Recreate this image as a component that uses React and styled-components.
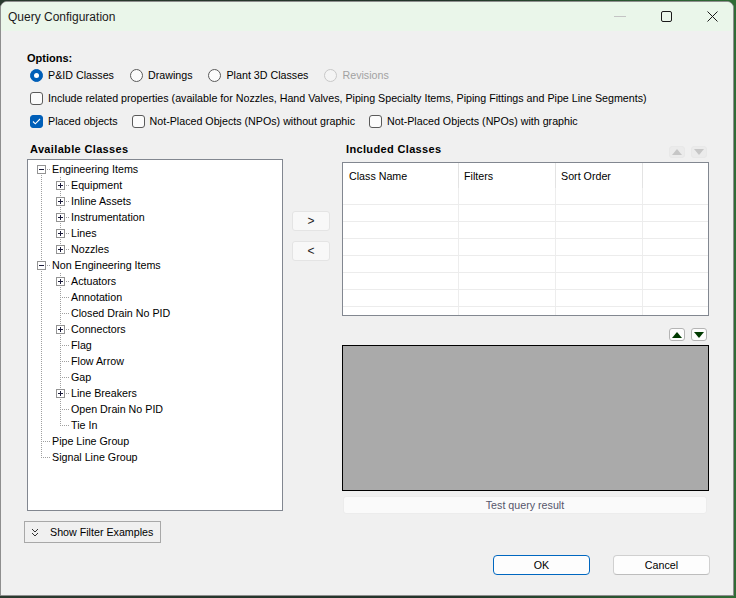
import React from 'react';
import styled, { createGlobalStyle } from 'styled-components';

const GlobalStyle = createGlobalStyle`
  html, body { margin: 0; padding: 0; }
  body {
    width: 736px; height: 598px; overflow: hidden;
    background: linear-gradient(90deg, #2a3a2e 0%, #23332a 60%, #2f6b35 100%);
    font-family: "Liberation Sans", Arial, sans-serif;
    font-size: 10.7px; color: #000;
  }
`;

const Window = styled.div`
  box-sizing: border-box;
  width: 734px;
  height: 595px;
  margin-top: 1px;
  border: 1px solid #8e8e8e;
  border-radius: 7px 7px 0 0;
  background: #f0f0f0;
  overflow: hidden;
  display: flex;
  flex-direction: column;
`;

const TitleBar = styled.div`
  height: 29px;
  flex: none;
  background: #eaf6ea;
  display: flex;
  align-items: center;
  padding-left: 7px;
`;

const Title = styled.div`
  flex: 1;
  font-family: "Segoe UI", "Liberation Sans", Arial, sans-serif;
  font-size: 12px;
  color: #1a1a1a;
`;

const Caption = styled.div`
  display: flex;
  height: 100%;
  margin-right: -2px;
`;

const CaptionButton = styled.div`
  width: 46px;
  height: 100%;
  display: flex;
  align-items: center;
  justify-content: center;
`;

const Content = styled.div`
  flex: 1;
  display: flex;
  flex-direction: column;
  padding: 20px 24px 0 26px;
`;

const BoldLabel = styled.div`
  font-weight: bold;
  font-size: 11px;
  line-height: 14px;
  height: 14px;
  letter-spacing: ${p => p.$spacing || '0px'};
  padding-left: ${p => p.$indent || 0}px;
`;

const OptionRow = styled.div`
  display: flex;
  align-items: center;
  height: 16px;
  margin-top: ${p => p.$top}px;
  padding-left: 3px;
  gap: ${p => p.$gap}px;
`;

const Choice = styled.label`
  display: flex;
  align-items: center;
  gap: 5px;
  white-space: nowrap;
  color: ${p => (p.$disabled ? '#a2a2a2' : '#000')};
`;

const RadioCircle = styled.span`
  box-sizing: border-box;
  flex: none;
  width: 13px;
  height: 13px;
  border-radius: 50%;
  border: 1px solid ${p => (p.$checked ? '#005fb8' : p.$disabled ? '#c8c8c8' : '#5a5a5a')};
  background: ${p => (p.$checked ? '#005fb8' : p.$disabled ? '#f4f4f4' : '#fbfbfb')};
  display: flex;
  align-items: center;
  justify-content: center;
  &::after {
    content: '';
    display: ${p => (p.$checked ? 'block' : 'none')};
    width: 5px;
    height: 5px;
    border-radius: 50%;
    background: #fff;
  }
`;

const CheckSquare = styled.span`
  box-sizing: border-box;
  flex: none;
  width: 13px;
  height: 13px;
  border-radius: 3px;
  border: 1px solid ${p => (p.$checked ? '#005fb8' : '#5a5a5a')};
  background: ${p => (p.$checked ? '#005fb8' : '#fbfbfb')};
  display: flex;
  align-items: center;
  justify-content: center;
`;

const Main = styled.div`
  display: grid;
  grid-template-columns: 256px 47px 379px;
  margin-top: 13px;
  & > :nth-child(2) { margin-left: 9px; }
  & > :nth-child(3) { margin-left: 12px; }
`;

const Column = styled.div`
  display: flex;
  flex-direction: column;
`;

const TreeBox = styled.div`
  box-sizing: border-box;
  margin-top: 3px;
  height: 352px;
  border: 1px solid #828790;
  background: #fff;
  padding: 1px 0 0 4px;
  overflow: hidden;
`;

const TreeRow = styled.div`
  display: flex;
  align-items: center;
  height: 16px;
  white-space: nowrap;
  & > svg { flex: none; display: block; }
`;

const TreeLabel = styled.span`
  margin-left: 1px;
  line-height: 16px;
`;

const MoveButton = styled.button`
  box-sizing: border-box;
  width: 38px;
  height: 20px;
  margin-top: ${p => p.$top}px;
  padding: 0;
  border: 1px solid #e4e4e4;
  border-radius: 3px;
  background: #f8f8f8;
  font-family: "Liberation Sans", Arial, sans-serif;
  font-size: 12px;
  color: #222;
  display: flex;
  align-items: center;
  justify-content: center;
`;

const HeaderRow = styled.div`
  display: flex;
  justify-content: space-between;
  height: 16px;
`;

const ArrowGroup = styled.div`
  display: flex;
  gap: 6px;
  margin-top: ${p => p.$top}px;
  margin-right: 2px;
  align-self: ${p => (p.$end ? 'flex-end' : 'auto')};
`;

const ArrowButton = styled.div`
  box-sizing: border-box;
  width: 16px;
  height: ${p => (p.$active ? 13 : 12)}px;
  border-radius: 3px;
  border: 1px solid ${p => (p.$active ? '#b4b4b4' : '#e8e8e8')};
  background: ${p => (p.$active ? '#fdfdfd' : '#ebebeb')};
  display: flex;
  align-items: center;
  justify-content: center;
`;

const Table = styled.div`
  box-sizing: border-box;
  margin-top: 4px;
  height: 154px;
  border: 1px solid #828790;
  background: #fff;
  overflow: hidden;
`;

const TableRow = styled.div`
  display: grid;
  grid-template-columns: 116px 97px 87px 1fr;
  height: ${p => (p.$header ? 25 : 17)}px;
  box-sizing: border-box;
  border-bottom: ${p => (p.$header ? 'none' : '1px solid #ececec')};
`;

const Cell = styled.div`
  box-sizing: border-box;
  border-right: 1px solid ${p => (p.$header ? '#e3e3e3' : '#ededed')};
  padding-left: ${p => p.$pad || 6}px;
  display: flex;
  align-items: center;
  white-space: nowrap;
  &:last-child { border-right: none; }
`;

const Preview = styled.div`
  box-sizing: border-box;
  margin-top: 4px;
  height: 146px;
  border: 1px solid #000;
  background: #aaaaaa;
`;

const TestButton = styled.div`
  box-sizing: border-box;
  margin: 5px 2px 0 1px;
  height: 18px;
  border: 1px solid #ececec;
  border-radius: 3px;
  background: #fafafa;
  color: #55556a;
  display: flex;
  align-items: center;
  justify-content: center;
`;

const FilterButton = styled.div`
  box-sizing: border-box;
  width: 137px;
  height: 22px;
  margin: 7px 0 0 -3px;
  border: 1px solid #a8a8a8;
  display: flex;
  align-items: center;
  gap: 11px;
  padding-left: 6px;
`;

const Footer = styled.div`
  display: flex;
  justify-content: flex-end;
  gap: 23px;
  margin: 12px -1px 0 0;
`;

const DialogButton = styled.div`
  box-sizing: border-box;
  width: 97px;
  height: 20px;
  border-radius: 4px;
  border: 1px solid ${p => (p.$primary ? '#0067c0' : '#d0d0d0')};
  border-bottom-color: ${p => (p.$primary ? '#0067c0' : '#bdbdbd')};
  background: #fdfdfd;
  display: flex;
  align-items: center;
  justify-content: center;
`;

const TREE = [
  {
    label: 'Engineering Items',
    children: [
      { label: 'Equipment', kids: true },
      { label: 'Inline Assets', kids: true },
      { label: 'Instrumentation', kids: true },
      { label: 'Lines', kids: true },
      { label: 'Nozzles', kids: true },
    ],
  },
  {
    label: 'Non Engineering Items',
    children: [
      { label: 'Actuators', kids: true },
      { label: 'Annotation' },
      { label: 'Closed Drain No PID' },
      { label: 'Connectors', kids: true },
      { label: 'Flag' },
      { label: 'Flow Arrow' },
      { label: 'Gap' },
      { label: 'Line Breakers', kids: true },
      { label: 'Open Drain No PID' },
      { label: 'Tie In' },
    ],
  },
  { label: 'Pipe Line Group' },
  { label: 'Signal Line Group' },
];

function flatten(nodes, level = 0, trail = [], out = []) {
  nodes.forEach((n, i) => {
    const last = i === nodes.length - 1;
    out.push({
      label: n.label,
      level,
      last,
      first: level === 0 && i === 0,
      trail,
      expandable: !!(n.children || n.kids),
      open: !!n.children,
    });
    if (n.children) flatten(n.children, level + 1, [...trail, !last], out);
  });
  return out;
}

const ROWS = flatten(TREE);
const DOT = { stroke: '#a0a0a0', strokeWidth: 1, strokeDasharray: '1 1', shapeRendering: 'crispEdges' };

function Guide({ row }) {
  const W = 19 * (row.level + 1);
  const base = 19 * row.level;
  const x0 = base + 9.5;
  return (
    <svg width={W} height={16} viewBox={`0 0 ${W} 16`}>
      {row.trail.map((cont, i) =>
        cont ? <line key={i} x1={19 * i + 9.5} y1={0} x2={19 * i + 9.5} y2={16} {...DOT} /> : null
      )}
      <line x1={x0} y1={row.first ? 8 : 0} x2={x0} y2={row.last ? 9 : 16} {...DOT} />
      <line x1={x0 + 1} y1={8.5} x2={base + 19} y2={8.5} {...DOT} />
      {row.expandable && (
        <g shapeRendering="crispEdges">
          <rect x={base + 5.5} y={4.5} width={8} height={8} fill="#fff" stroke="#939393" />
          <line x1={base + 7} y1={8.5} x2={base + 12} y2={8.5} stroke="#1a1a3a" />
          {!row.open && <line x1={base + 9.5} y1={6} x2={base + 9.5} y2={11} stroke="#1a1a3a" />}
        </g>
      )}
    </svg>
  );
}

function Tri({ up, color }) {
  return (
    <svg width="10" height="6" viewBox="0 0 10 6">
      <polygon points={up ? '0,6 10,6 5,0' : '0,0 10,0 5,6'} fill={color} />
    </svg>
  );
}

function Radio({ label, checked, disabled }) {
  return (
    <Choice $disabled={disabled}>
      <RadioCircle $checked={checked} $disabled={disabled} />
      {label}
    </Choice>
  );
}

function Check({ label, checked }) {
  return (
    <Choice>
      <CheckSquare $checked={checked}>
        {checked && (
          <svg width="9" height="7" viewBox="0 0 9 7">
            <polyline points="1,3.5 3.3,5.8 8,1" fill="none" stroke="#fff" strokeWidth="1.1" />
          </svg>
        )}
      </CheckSquare>
      {label}
    </Choice>
  );
}

const BODY_ROWS = Array.from({ length: 8 });

export default function App() {
  return (
    <>
      <GlobalStyle />
      <Window>
        <TitleBar>
          <Title>Query Configuration</Title>
          <Caption>
            <CaptionButton>
              <svg width="12" height="2" viewBox="0 0 12 2">
                <line x1="0" y1="0.5" x2="12" y2="0.5" stroke="#c4c4c4" />
              </svg>
            </CaptionButton>
            <CaptionButton>
              <svg width="11" height="11" viewBox="0 0 11 11">
                <rect x="0.5" y="0.5" width="10" height="10" rx="1.5" fill="none" stroke="#1a1a1a" />
              </svg>
            </CaptionButton>
            <CaptionButton>
              <svg width="11" height="11" viewBox="0 0 11 11">
                <path d="M0.5 0.5 L10.5 10.5 M10.5 0.5 L0.5 10.5" stroke="#1a1a1a" strokeWidth="1" />
              </svg>
            </CaptionButton>
          </Caption>
        </TitleBar>

        <Content>
          <BoldLabel>Options:</BoldLabel>
          <OptionRow $top={2} $gap={16}>
            <Radio label="P&ID Classes" checked />
            <Radio label="Drawings" />
            <Radio label="Plant 3D Classes" />
            <Radio label="Revisions" disabled />
          </OptionRow>
          <OptionRow $top={7} $gap={14}>
            <Check label="Include related properties (available for Nozzles, Hand Valves, Piping Specialty Items, Piping Fittings and Pipe Line Segments)" />
          </OptionRow>
          <OptionRow $top={7} $gap={14}>
            <Check label="Placed objects" checked />
            <Check label="Not-Placed Objects (NPOs) without graphic" />
            <Check label="Not-Placed Objects (NPOs) with graphic" />
          </OptionRow>

          <Main>
            <Column>
              <BoldLabel $indent={3} $spacing="0.35px">Available Classes</BoldLabel>
              <TreeBox>
                {ROWS.map(r => (
                  <TreeRow key={r.label}>
                    <Guide row={r} />
                    <TreeLabel>{r.label}</TreeLabel>
                  </TreeRow>
                ))}
              </TreeBox>
            </Column>

            <Column>
              <MoveButton $top={69}>&gt;</MoveButton>
              <MoveButton $top={10}>&lt;</MoveButton>
            </Column>

            <Column>
              <HeaderRow>
                <BoldLabel $indent={4} $spacing="0.35px">Included Classes</BoldLabel>
                <ArrowGroup $top={4}>
                  <ArrowButton><Tri up color="#c6c6c6" /></ArrowButton>
                  <ArrowButton><Tri color="#c6c6c6" /></ArrowButton>
                </ArrowGroup>
              </HeaderRow>
              <Table>
                <TableRow $header>
                  <Cell $header>Class Name</Cell>
                  <Cell $header $pad={5}>Filters</Cell>
                  <Cell $header $pad={5}>Sort Order</Cell>
                  <Cell $header />
                </TableRow>
                {BODY_ROWS.map((_, i) => (
                  <TableRow key={i}>
                    <Cell />
                    <Cell />
                    <Cell />
                    <Cell />
                  </TableRow>
                ))}
              </Table>
              <ArrowGroup $top={12} $end>
                <ArrowButton $active><Tri up color="#003a00" /></ArrowButton>
                <ArrowButton $active><Tri color="#003a00" /></ArrowButton>
              </ArrowGroup>
              <Preview />
              <TestButton>Test query result</TestButton>
            </Column>
          </Main>

          <FilterButton>
            <svg width="8" height="9" viewBox="0 0 8 9">
              <polyline points="1,1 4,4 7,1" fill="none" stroke="#333" />
              <polyline points="1,5 4,8 7,5" fill="none" stroke="#333" />
            </svg>
            <span>Show Filter Examples</span>
          </FilterButton>

          <Footer>
            <DialogButton $primary>OK</DialogButton>
            <DialogButton>Cancel</DialogButton>
          </Footer>
        </Content>
      </Window>
    </>
  );
}
